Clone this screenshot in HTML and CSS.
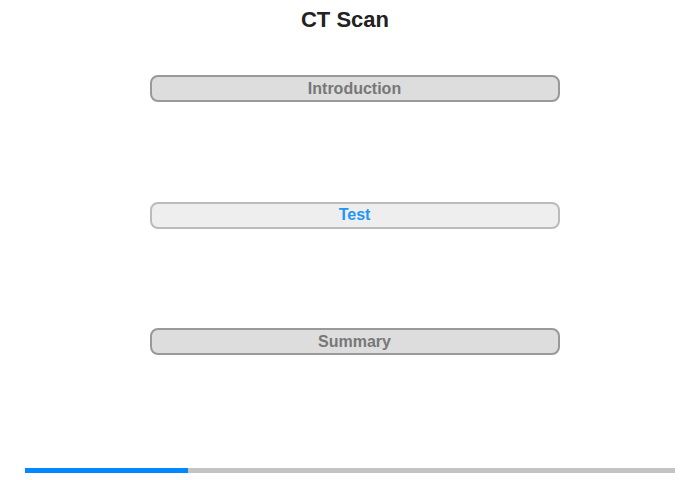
FILE: index.html
```html
<!DOCTYPE html>
<html>
<head>
    <meta name="viewport" content="width=device-width, initial-scale=1">
    <link rel="stylesheet" href="styles.css">
</head>
<body>
    <div class="screen">
        <h1 class="title">CT Scan</h1>

        <div class="menu">
            <button class="step">Introduction</button>
            <button class="step current">Test</button>
            <button class="step">Summary</button>
        </div>

        <div class="progress">
            <div class="progress-fill" style="width: 25%;"></div>
        </div>
    </div>
</body>
</html>
```

FILE: styles.css
```css
html, body {
    margin: 0;
    height: 100%;
}

body {
    background-color: #ffffff;
    font-family: "Liberation Sans", Arial, sans-serif;
}

.screen {
    width: 700px;
    height: 480px;
    display: flex;
    flex-direction: column;
    align-items: center;
}

.title {
    margin: 0 10px 0 0;
    padding-top: 8px;
    height: 30px;
    line-height: 23px;
    font-size: 22px;
    font-weight: bold;
    color: #222;
}

.menu {
    margin-top: 37px;
    margin-left: 9px;
    display: flex;
    flex-direction: column;
    gap: 99.5px;
}

.step {
    width: 410px;
    height: 27px;
    border: 2px solid #999;
    border-radius: 8px;
    background-color: #dddddd;
    color: #777;
    font-family: "Liberation Sans", Arial, sans-serif;
    font-size: 16px;
    font-weight: bold;
    padding: 0;
    cursor: pointer;
}

.step.current {
    background-color: #eeeeee;
    border-color: #bbb;
    color: #2196f3;
}

.progress {
    margin-top: auto;
    margin-bottom: 7px;
    width: 650px;
    height: 5px;
    background-color: #c4c4c4;
}

.progress-fill {
    height: 100%;
    background-color: #0088ff;
}
```
